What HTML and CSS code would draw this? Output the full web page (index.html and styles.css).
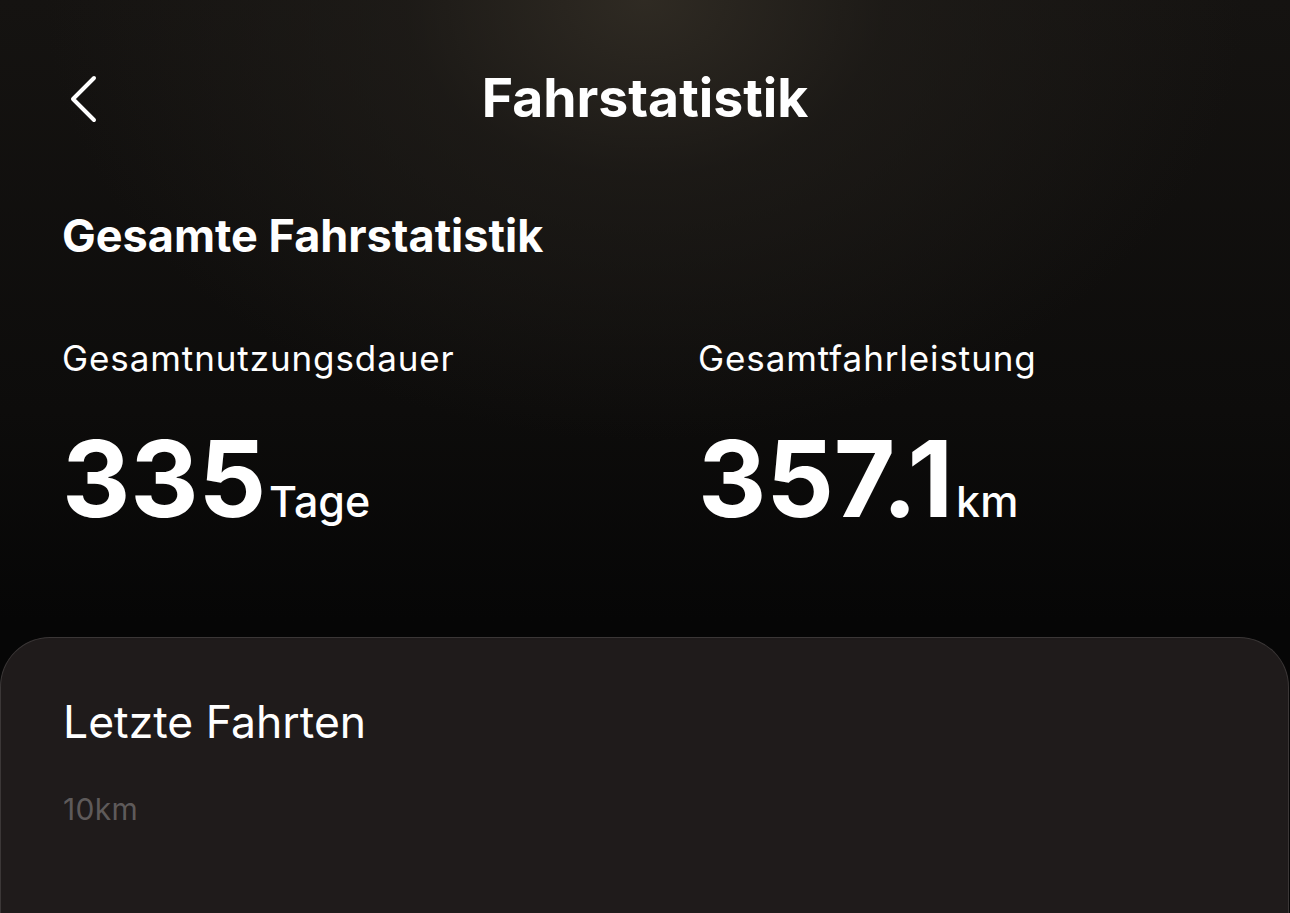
FILE: index.html
```html
<!DOCTYPE html>
<html lang="de">
<head>
<meta charset="utf-8">
<title>Fahrstatistik</title>
<link rel="stylesheet" href="styles.css">
</head>
<body>
<div class="screen">
  <header class="topbar">
    <button class="back" aria-label="Zurück">
      <svg width="34" height="50" viewBox="0 0 34 50"><path d="M28 4 L7 25 L28 46" fill="none" stroke="#fff" stroke-width="4" stroke-linecap="round" stroke-linejoin="round"/></svg>
    </button>
    <h1 class="title">Fahrstatistik</h1>
  </header>

  <section class="overview">
    <h2 class="section-title">Gesamte Fahrstatistik</h2>
    <div class="stats">
      <div class="stat">
        <div class="stat-label">Gesamtnutzungsdauer</div>
        <div class="stat-value"><span class="num">335</span><span class="unit">Tage</span></div>
      </div>
      <div class="stat">
        <div class="stat-label">Gesamtfahrleistung</div>
        <div class="stat-value"><span class="num">357.1</span><span class="unit">km</span></div>
      </div>
    </div>
  </section>

  <section class="card">
    <h2 class="card-title">Letzte Fahrten</h2>
    <div class="axis-label">10km</div>
  </section>
</div>
</body>
</html>
```

FILE: styles.css
```css
* { box-sizing: border-box; }
html, body { margin: 0; padding: 0; }
body {
  width: 1290px;
  height: 913px;
  overflow: hidden;
  background: #070707;
  font-family: "Inter", "Noto Sans", sans-serif;
  color: #fff;
}
.screen {
  width: 1290px;
  height: 913px;
  display: flex;
  flex-direction: column;
  background:
    radial-gradient(ellipse 600px 440px at 645px 0px, rgba(50,45,37,0.9) 0%, rgba(33,30,26,0.65) 40%, rgba(10,10,10,0) 100%),
    linear-gradient(180deg, #151311 0%, #0d0c0b 45%, #060606 68%, #060606 100%);
}
.topbar {
  position: relative;
  height: 200px;
  display: flex;
  justify-content: center;
  align-items: flex-start;
  padding-top: 66px;
}
.back {
  position: absolute;
  left: 66px;
  top: 74px;
  background: none;
  border: 0;
  padding: 0;
  width: 34px;
  height: 50px;
}
.back svg { display: block; }
.title {
  margin: 0;
  font-size: 53.5px;
  font-weight: 700;
  line-height: 64px;
}
.overview {
  padding: 0 62px;
}
.section-title {
  margin: 8px 0 0;
  font-size: 45px;
  font-weight: 700;
  line-height: 56px;
}
.stats {
  display: grid;
  grid-template-columns: 636px 1fr;
  margin-top: 74px;
}
.stat-label {
  font-size: 35px;
  font-weight: 400;
  line-height: 40px;
  letter-spacing: 0.9px;
}
.stat-value {
  display: flex;
  align-items: baseline;
  margin-top: 46px;
}
.num {
  font-size: 106px;
  font-weight: 700;
  line-height: 110px;
  letter-spacing: -0.2px;
}
.unit {
  font-size: 43px;
  font-weight: 500;
  margin-left: 3px;
}
.card {
  margin-top: 103px;
  flex: 1;
  margin-right: 1px;
  background: #1f1b1b;
  border: 1.5px solid #3b3737;
  border-bottom: 0;
  border-radius: 50px 50px 0 0;
  padding: 56px 62px 0;
}
.card-title {
  margin: 0;
  font-size: 44.5px;
  font-weight: 400;
  line-height: 56px;
}
.axis-label {
  margin-top: 42px;
  font-size: 30px;
  color: #5e5a5a;
  line-height: 34px;
  letter-spacing: 0.3px;
}
```
